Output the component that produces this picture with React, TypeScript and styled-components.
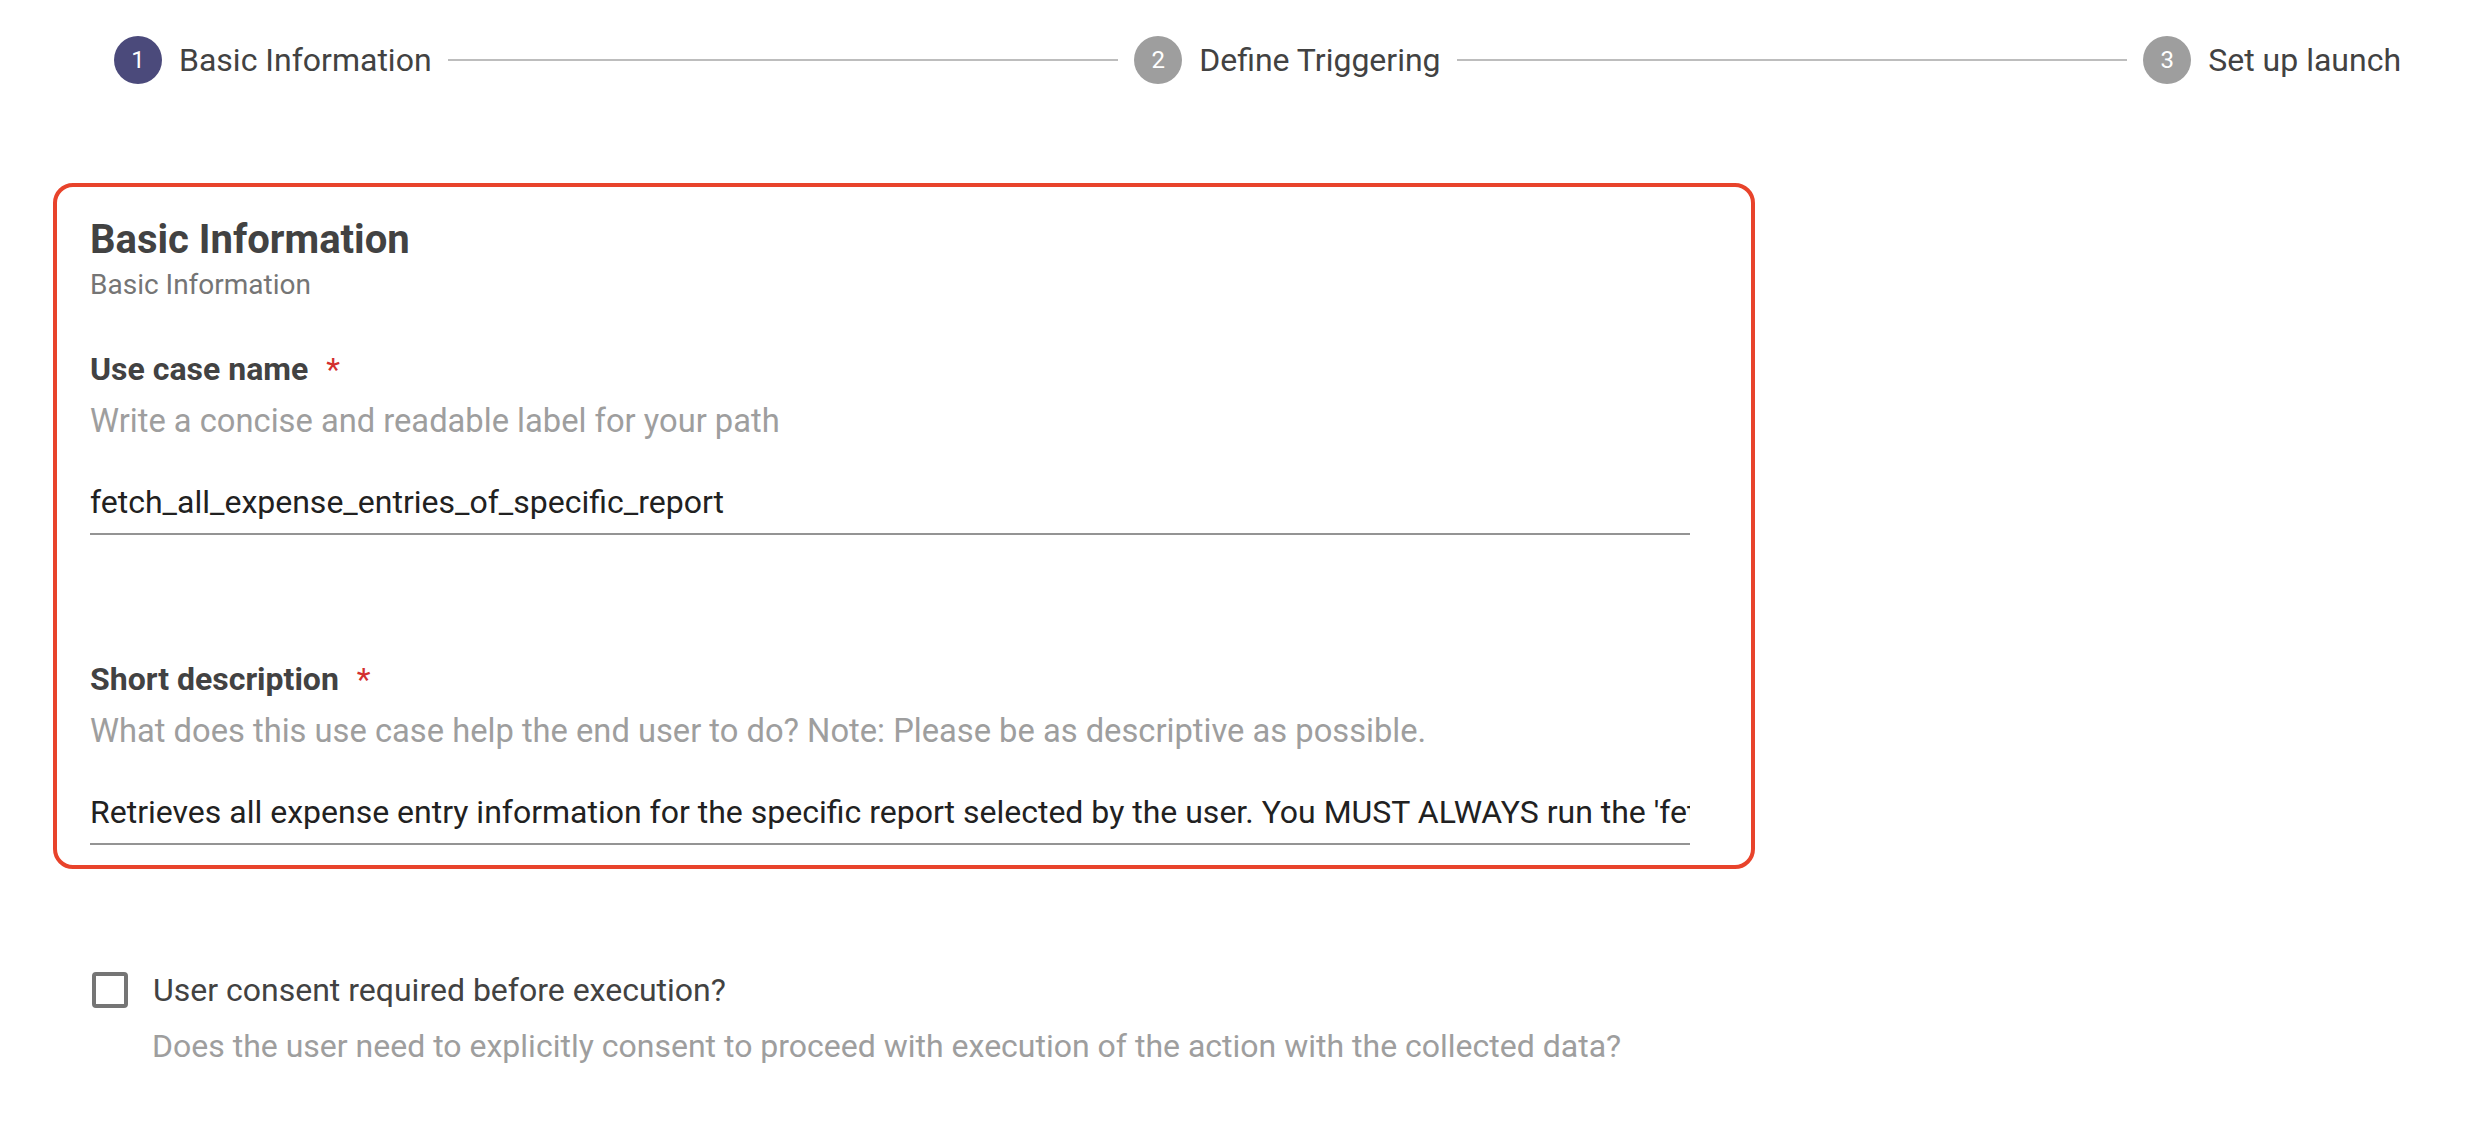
import React from "react"
import styled, { createGlobalStyle } from "styled-components"

const GlobalStyle = createGlobalStyle`
  html, body {
    margin: 0;
    padding: 0;
    background: #ffffff;
    font-family: Roboto, "Liberation Sans", Arial, sans-serif;
  }
`

const Page = styled.div`
  width: 2478px;
  min-height: 1148px;
  display: flex;
  flex-direction: column;
`

const Stepper = styled.div`
  display: flex;
  align-items: center;
  gap: 16px;
  padding: 36px 77px 0 114px;
`

const Step = styled.div`
  display: flex;
  align-items: center;
  gap: 17px;
`

const StepIcon = styled.div<{ $active?: boolean }>`
  width: 48px;
  height: 48px;
  border-radius: 50%;
  background: ${p => (p.$active ? "#4b4a7b" : "#9e9e9e")};
  color: #ffffff;
  font-size: 24px;
  display: flex;
  align-items: center;
  justify-content: center;
`

const StepLabel = styled.span`
  font-size: 32px;
  line-height: 48px;
  color: #424242;
  white-space: nowrap;
`

const Connector = styled.div`
  flex: 1;
  height: 2px;
  background: #bdbdbd;
`

const Card = styled.section`
  box-sizing: border-box;
  width: 1702px;
  margin: 99px 0 0 53px;
  border: 4px solid #e8432b;
  border-radius: 20px;
  padding: 30px 61px 20px 33px;
  display: flex;
  flex-direction: column;
`

const Title = styled.h2`
  margin: 0;
  font-size: 40px;
  line-height: 46px;
  font-weight: 700;
  color: #424242;
`

const Subtitle = styled.div`
  margin-top: 5px;
  font-size: 28px;
  line-height: 34px;
  color: #757575;
`

const Field = styled.div<{ $first?: boolean }>`
  display: flex;
  flex-direction: column;
  margin-top: ${p => (p.$first ? "49px" : "126px")};
`

const Label = styled.label`
  font-size: 32px;
  line-height: 36px;
  font-weight: 700;
  color: #424242;
`

const Required = styled.span`
  color: #d32f2f;
  font-weight: 400;
  margin-left: 18px;
`

const Helper = styled.div`
  margin-top: 15px;
  font-size: 32.7px;
  line-height: 38px;
  color: #9e9e9e;
`

const TextInput = styled.input`
  box-sizing: border-box;
  width: 100%;
  margin-top: 42px;
  padding: 0 0 11px 0;
  border: none;
  border-bottom: 2px solid #949494;
  outline: none;
  background: transparent;
  font-family: Roboto, "Liberation Sans", Arial, sans-serif;
  font-size: 32px;
  line-height: 40px;
  height: 53px;
  color: #212121;
`

const Consent = styled.div`
  margin: 102px 0 0 92px;
  display: flex;
  flex-direction: column;
`

const ConsentRow = styled.div`
  display: flex;
  align-items: center;
  gap: 25px;
`

const CheckBox = styled.span`
  box-sizing: border-box;
  width: 36px;
  height: 36px;
  border: 4px solid #757575;
  border-radius: 4px;
`

const ConsentLabel = styled.span`
  font-size: 32px;
  line-height: 38px;
  color: #424242;
`

const ConsentHelper = styled.div`
  margin: 18px 0 0 60px;
  font-size: 32px;
  line-height: 38px;
  color: #9e9e9e;
`

const steps = ["Basic Information", "Define Triggering", "Set up launch"]

const App: React.FC = () => {
  return (
    <Page>
      <GlobalStyle />
      <Stepper>
        {steps.map((s, i) => (
          <React.Fragment key={s}>
            {i > 0 && <Connector />}
            <Step>
              <StepIcon $active={i === 0}>{i + 1}</StepIcon>
              <StepLabel>{s}</StepLabel>
            </Step>
          </React.Fragment>
        ))}
      </Stepper>

      <Card>
        <Title>Basic Information</Title>
        <Subtitle>Basic Information</Subtitle>

        <Field $first>
          <Label>
            Use case name<Required>*</Required>
          </Label>
          <Helper>Write a concise and readable label for your path</Helper>
          <TextInput readOnly value="fetch_all_expense_entries_of_specific_report" />
        </Field>

        <Field>
          <Label>
            Short description<Required>*</Required>
          </Label>
          <Helper>What does this use case help the end user to do? Note: Please be as descriptive as possible.</Helper>
          <TextInput
            readOnly
            value="Retrieves all expense entry information for the specific report selected by the user. You MUST ALWAYS run the 'fetch_all_expense_reports' use case first."
          />
        </Field>
      </Card>

      <Consent>
        <ConsentRow>
          <CheckBox />
          <ConsentLabel>User consent required before execution?</ConsentLabel>
        </ConsentRow>
        <ConsentHelper>
          Does the user need to explicitly consent to proceed with execution of the action with the collected data?
        </ConsentHelper>
      </Consent>
    </Page>
  )
}

export default App
